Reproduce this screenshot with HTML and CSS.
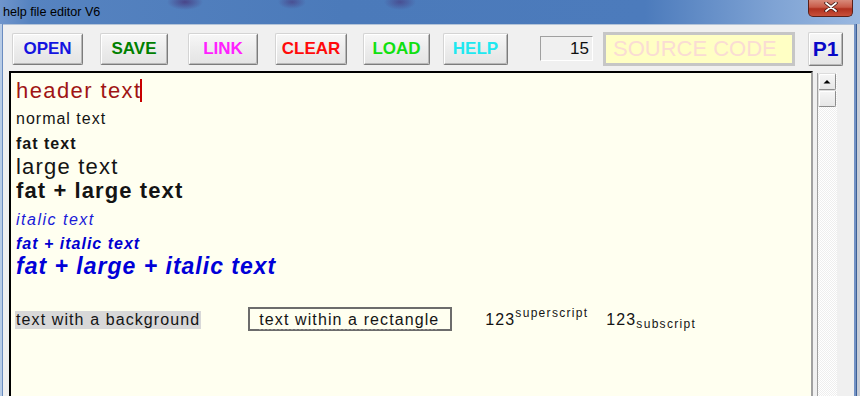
FILE: index.html
```html
<!DOCTYPE html>
<html>
<head>
<meta charset="utf-8">
<title>help file editor V6</title>
<link rel="stylesheet" href="styles.css">
</head>
<body>
<div class="window">
  <div class="titlebar">
    <span class="title">help file editor V6</span>
    <span class="close"><svg width="14" height="10" viewBox="0 0 14 10"><path d="M2 1 L12 9 M12 1 L2 9" stroke="#3a1410" stroke-width="3.4" stroke-linecap="round"/><path d="M2 1 L12 9 M12 1 L2 9" stroke="#fff" stroke-width="1.8" stroke-linecap="round"/></svg></span>
  </div>
  <div class="frame">
    <div class="edge-left"></div>
    <div class="client">
      <div class="toolbar">
        <button class="btn b-open">OPEN</button>
        <button class="btn b-save">SAVE</button>
        <button class="btn b-link">LINK</button>
        <button class="btn b-clear">CLEAR</button>
        <button class="btn b-load">LOAD</button>
        <button class="btn b-help">HELP</button>
        <div class="num">15</div>
        <div class="src">SOURCE CODE</div>
        <button class="btn b-p1">P1</button>
      </div>
      <div class="editor">
        <div class="doc">
          <div class="ln header">header text<span class="caret"></span></div>
          <div class="ln normal">normal text</div>
          <div class="ln fat">fat text</div>
          <div class="ln large">large text</div>
          <div class="ln fatlarge">fat + large text</div>
          <div class="ln italic">italic text</div>
          <div class="ln fatitalic">fat + italic text</div>
          <div class="ln fli">fat + large + italic text</div>
          <div class="ln row">
            <span class="bg">text with a background</span>
            <span class="rect"><span class="rect-in">text within a rectangle</span></span>
            <span class="num1">123<span class="sup">superscript</span></span>
            <span class="num2">123<span class="sub">subscript</span></span>
          </div>
        </div>
        <div class="scrollbar">
          <div class="sb-btn"><svg width="8" height="5" viewBox="0 0 8 5"><path d="M0.5 4.5 L4 1 L7.5 4.5 Z" fill="#000"/></svg></div>
          <div class="sb-thumb"></div>
        </div>
      </div>
    </div>
    <div class="edge-right"></div>
  </div>
</div>
</body>
</html>
```
FILE: styles.css
```css
* { box-sizing: border-box; }
html, body { margin: 0; padding: 0; }
body {
  width: 860px;
  height: 396px;
  overflow: hidden;
  font-family: "Liberation Sans", Arial, sans-serif;
  background: #f0f0f0;
}
.window {
  width: 860px;
  height: 396px;
  display: flex;
  flex-direction: column;
  overflow: hidden;
}
.titlebar {
  height: 24px;
  flex: none;
  display: flex;
  align-items: flex-start;
  background:
    radial-gradient(ellipse 18px 8px at 185px 2px, rgba(70,50,120,0.75), rgba(70,50,120,0) 100%),
    radial-gradient(ellipse 14px 7px at 292px 2px, rgba(70,50,120,0.6), rgba(70,50,120,0) 100%),
    radial-gradient(ellipse 16px 8px at 400px 2px, rgba(70,50,120,0.6), rgba(70,50,120,0) 100%),
    linear-gradient(to right, #6f95cc 0px, #5683c0 30px, #4b7aba 40%, #4c7bbc 75%, #7fa3d4 90%, #9ab8e0 100%);
}
.title {
  font-size: 12.6px;
  color: #000;
  padding: 5px 0 0 3px;
  line-height: 14px;
}
.close {
  margin-left: auto;
  margin-right: 7px;
  width: 45px;
  height: 17px;
  border: 1px solid #5a2018;
  border-top: none;
  border-radius: 0 0 5px 5px;
  background: linear-gradient(#d88a7a 0%, #c85a48 45%, #b0301e 55%, #c8503a 100%);
  display: flex;
  justify-content: center;
  align-items: flex-start;
  padding-top: 2px;
}
.frame {
  flex: 1;
  display: flex;
  min-height: 0;
}
.edge-left {
  width: 3px;
  flex: none;
  background: linear-gradient(to right, #b8cce6 0, #b8cce6 2px, #6a8cc0 2px);
}
.edge-right {
  width: 6px;
  flex: none;
  background: linear-gradient(to right, #7392c4 0, #7392c4 2px, #3c5f96 2px, #3c5f96 3px, #c8cdd6 3px);
}
.client {
  flex: 1;
  display: flex;
  flex-direction: column;
  background: #f0f0f0;
  border-top: 1px solid #b4c4d8;
  min-width: 0;
}
.toolbar {
  height: 46px;
  flex: none;
  display: flex;
  align-items: center;
  padding-top: 1px;
}
.btn {
  height: 32px;
  padding: 0;
  font-family: "Liberation Sans", Arial, sans-serif;
  font-weight: bold;
  font-size: 17px;
  background: linear-gradient(#f7f7f7, #ececec 50%, #e4e4e4);
  border: 1px solid;
  border-color: #d4d4d4 #7c7c7c #7c7c7c #d4d4d4;
  border-radius: 2px;
  box-shadow: inset 1px 1px 0 #ffffff, inset -1px -1px 0 #b8b8b8;
}
.b-open { margin-left: 9px; width: 71px; color: #1414e0; }
.b-save { margin-left: 17px; width: 68px; color: #008000; }
.b-link { margin-left: 20px; width: 70px; color: #ff20ff; }
.b-clear { margin-left: 17px; width: 72px; color: #ff0a0a; }
.b-load { margin-left: 16px; width: 67px; color: #10e010; }
.b-help { margin-left: 13px; width: 65px; color: #20e8f0; }
.b-p1 { margin-left: 13px; width: 35px; height: 34px; font-size: 21px; color: #0808c8; }
.num {
  margin-left: 32px;
  width: 53px;
  height: 25px;
  border: 1px solid;
  border-color: #a0a0a0 #ffffff #ffffff #a0a0a0;
  background: #f0f0f0;
  text-align: right;
  font-size: 17px;
  line-height: 23px;
  padding-right: 3px;
  color: #101010;
}
.src {
  margin-left: 10px;
  width: 192px;
  height: 34px;
  border: 3px solid #c6c6c6;
  background: #ffffc4;
  color: #fadcd4;
  font-size: 22px;
  line-height: 28px;
  padding-left: 7px;
}
.editor {
  flex: 1;
  display: flex;
  min-height: 0;
}
.doc {
  margin-left: 6px;
  width: 804px;
  flex: none;
  background: #fffff0;
  border-top: 2px solid #000;
  border-left: 2px solid #000;
  border-right: 2px solid #a0a0a0;
  padding: 6px 0 0 5px;
  color: #141414;
  letter-spacing: 1px;
}
.ln {
  line-height: 24px;
  height: 24px;
  white-space: nowrap;
}
.header { font-size: 22px; color: #a01414; letter-spacing: 1.4px; }
.caret {
  display: inline-block;
  width: 2px;
  height: 23px;
  background: #c80000;
  vertical-align: -4px;
  margin-left: -1px;
}
.normal { font-size: 16px; margin-top: 4px; }
.fat { font-size: 16px; font-weight: bold; margin-top: 1px; }
.large { font-size: 22px; margin-top: -1px; letter-spacing: 1.2px; }
.fatlarge { font-size: 22px; font-weight: bold; letter-spacing: 1.1px; }
.italic { font-size: 16px; font-style: italic; color: #1a1ad8; margin-top: 5px; letter-spacing: 1.5px; }
.fatitalic { font-size: 16px; font-style: italic; font-weight: bold; color: #0000d0; }
.fli { font-size: 23px; font-style: italic; font-weight: bold; color: #0000d8; margin-top: -2px; }
.row {
  font-size: 16px;
  margin-top: 29px;
  display: flex;
  align-items: baseline;
  letter-spacing: 1.1px;
}
.bg {
  background: #d8d8d8;
  margin-left: -1px;
  padding: 0 1px;
  line-height: 18px;
}
.rect {
  display: inline-block;
  margin-left: 47px;
  border: 2px solid #6c6c6c;
  line-height: 18px;
  height: 24px;
  padding: 2px 11px 0 9px;
}
.rect-in {
  display: inline-block;
  background-image: linear-gradient(to right, #909090 50%, transparent 50%);
  background-size: 4px 1px;
  background-repeat: repeat-x;
  background-position: 0 100%;
  padding-bottom: 1px;
  line-height: 18px;
}
.num1 { margin-left: 33px; }
.num2 { margin-left: 18px; }
.sup { font-size: 12px; vertical-align: 8px; line-height: 1; letter-spacing: 1.3px; }
.sub { font-size: 12px; vertical-align: -3px; line-height: 1; letter-spacing: 1.3px; }
.scrollbar {
  margin-left: 4px;
  margin-top: 2px;
  width: 20px;
  flex: none;
  border-left: 1px solid #a0a0a0;
  background-color: #fafafa;
  background-image: repeating-conic-gradient(#eeeeee 0 25%, #ffffff 0 50%);
  background-size: 2px 2px;
  display: flex;
  flex-direction: column;
}
.sb-btn, .sb-thumb {
  width: 18px;
  height: 17px;
  border: 1px solid;
  border-color: #dcdcdc #8c8c8c #8c8c8c #dcdcdc;
  border-radius: 2px;
  background: linear-gradient(#f6f6f6, #e6e6e6);
  box-shadow: inset 1px 1px 0 #fff;
}
.sb-btn {
  display: flex;
  align-items: center;
  justify-content: center;
}
```
